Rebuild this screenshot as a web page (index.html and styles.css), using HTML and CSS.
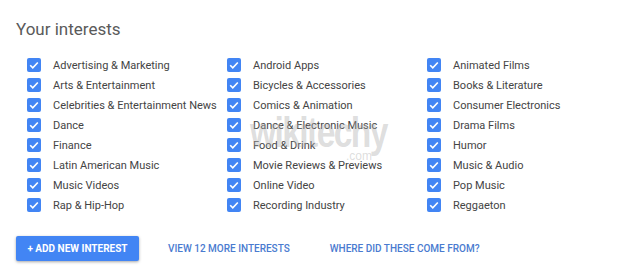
FILE: index.html
```html
<!DOCTYPE html>
<html>
<head>
<meta charset="utf-8">
<link rel="stylesheet" href="styles.css">
</head>
<body>
<div class="page">
  <h1 class="title">Your interests</h1>
  <div class="grid">
    <div class="item"><span class="box"><svg viewBox="0 0 14 14"><path d="M3.2 7.2l2.6 2.6 5-5.3"/></svg></span>Advertising &amp; Marketing</div>
    <div class="item"><span class="box"><svg viewBox="0 0 14 14"><path d="M3.2 7.2l2.6 2.6 5-5.3"/></svg></span>Android Apps</div>
    <div class="item"><span class="box"><svg viewBox="0 0 14 14"><path d="M3.2 7.2l2.6 2.6 5-5.3"/></svg></span>Animated Films</div>
    <div class="item"><span class="box"><svg viewBox="0 0 14 14"><path d="M3.2 7.2l2.6 2.6 5-5.3"/></svg></span>Arts &amp; Entertainment</div>
    <div class="item"><span class="box"><svg viewBox="0 0 14 14"><path d="M3.2 7.2l2.6 2.6 5-5.3"/></svg></span>Bicycles &amp; Accessories</div>
    <div class="item"><span class="box"><svg viewBox="0 0 14 14"><path d="M3.2 7.2l2.6 2.6 5-5.3"/></svg></span>Books &amp; Literature</div>
    <div class="item"><span class="box"><svg viewBox="0 0 14 14"><path d="M3.2 7.2l2.6 2.6 5-5.3"/></svg></span>Celebrities &amp; Entertainment News</div>
    <div class="item"><span class="box"><svg viewBox="0 0 14 14"><path d="M3.2 7.2l2.6 2.6 5-5.3"/></svg></span>Comics &amp; Animation</div>
    <div class="item"><span class="box"><svg viewBox="0 0 14 14"><path d="M3.2 7.2l2.6 2.6 5-5.3"/></svg></span>Consumer Electronics</div>
    <div class="item"><span class="box"><svg viewBox="0 0 14 14"><path d="M3.2 7.2l2.6 2.6 5-5.3"/></svg></span>Dance</div>
    <div class="item"><span class="box"><svg viewBox="0 0 14 14"><path d="M3.2 7.2l2.6 2.6 5-5.3"/></svg></span>Dance &amp; Electronic Music</div>
    <div class="item"><span class="box"><svg viewBox="0 0 14 14"><path d="M3.2 7.2l2.6 2.6 5-5.3"/></svg></span>Drama Films</div>
    <div class="item"><span class="box"><svg viewBox="0 0 14 14"><path d="M3.2 7.2l2.6 2.6 5-5.3"/></svg></span>Finance</div>
    <div class="item"><span class="box"><svg viewBox="0 0 14 14"><path d="M3.2 7.2l2.6 2.6 5-5.3"/></svg></span>Food &amp; Drink</div>
    <div class="item"><span class="box"><svg viewBox="0 0 14 14"><path d="M3.2 7.2l2.6 2.6 5-5.3"/></svg></span>Humor</div>
    <div class="item"><span class="box"><svg viewBox="0 0 14 14"><path d="M3.2 7.2l2.6 2.6 5-5.3"/></svg></span>Latin American Music</div>
    <div class="item"><span class="box"><svg viewBox="0 0 14 14"><path d="M3.2 7.2l2.6 2.6 5-5.3"/></svg></span>Movie Reviews &amp; Previews</div>
    <div class="item"><span class="box"><svg viewBox="0 0 14 14"><path d="M3.2 7.2l2.6 2.6 5-5.3"/></svg></span>Music &amp; Audio</div>
    <div class="item"><span class="box"><svg viewBox="0 0 14 14"><path d="M3.2 7.2l2.6 2.6 5-5.3"/></svg></span>Music Videos</div>
    <div class="item"><span class="box"><svg viewBox="0 0 14 14"><path d="M3.2 7.2l2.6 2.6 5-5.3"/></svg></span>Online Video</div>
    <div class="item"><span class="box"><svg viewBox="0 0 14 14"><path d="M3.2 7.2l2.6 2.6 5-5.3"/></svg></span>Pop Music</div>
    <div class="item"><span class="box"><svg viewBox="0 0 14 14"><path d="M3.2 7.2l2.6 2.6 5-5.3"/></svg></span>Rap &amp; Hip-Hop</div>
    <div class="item"><span class="box"><svg viewBox="0 0 14 14"><path d="M3.2 7.2l2.6 2.6 5-5.3"/></svg></span>Recording Industry</div>
    <div class="item"><span class="box"><svg viewBox="0 0 14 14"><path d="M3.2 7.2l2.6 2.6 5-5.3"/></svg></span>Reggaeton</div>
  </div>
  <div class="actions">
    <button class="btn">+ ADD NEW INTEREST</button>
    <a class="link link-more">VIEW 12 MORE INTERESTS</a>
    <a class="link">WHERE DID THESE COME FROM?</a>
  </div>
  <div class="watermark"><span class="wm-main">wikitechy</span><span class="wm-com">.com</span></div>
</div>
</body>
</html>
```
FILE: styles.css
```css
html, body {
  margin: 0;
  padding: 0;
  background: #ffffff;
}
.page {
  position: relative;
  width: 640px;
  height: 276px;
  padding: 17px 0 0 16px;
  box-sizing: border-box;
  font-family: Roboto, "Liberation Sans", Arial, sans-serif;
}
.title {
  margin: 0;
  font-size: 17px;
  line-height: 24px;
  font-weight: 400;
  color: #5a5a5a;
}
.grid {
  margin-top: 14px;
  margin-left: 11px;
  display: grid;
  grid-template-columns: 200px 200px 200px;
  grid-auto-rows: 20px;
}
.item {
  display: flex;
  align-items: center;
  font-size: 11px;
  color: #444444;
  white-space: nowrap;
}
.box {
  width: 14px;
  height: 14px;
  border-radius: 2px;
  background: #4285f4;
  margin-right: 12px;
  display: flex;
  flex: none;
}
.box svg {
  width: 14px;
  height: 14px;
}
.box path {
  fill: none;
  stroke: #ffffff;
  stroke-width: 1.6;
}
.actions {
  margin-top: 21px;
  display: flex;
  align-items: center;
}
.btn {
  width: 123px;
  height: 25px;
  border: none;
  border-radius: 2px;
  background: #4285f4;
  color: #ffffff;
  font-family: Roboto, "Liberation Sans", Arial, sans-serif;
  font-size: 10px;
  font-weight: 700;
  padding: 0;
  box-shadow: 0 1px 3px rgba(0, 0, 0, 0.35);
}
.link {
  font-size: 10px;
  font-weight: 500;
  color: #4a7bd0;
  text-transform: uppercase;
}
.link-more {
  margin-left: 29px;
  margin-right: 40px;
}
.watermark {
  position: absolute;
  left: 250px;
  top: 110px;
  pointer-events: none;
  color: rgba(170, 170, 170, 0.4);
  font-family: "Liberation Sans", sans-serif;
}
.wm-main {
  display: block;
  font-size: 42px;
  font-weight: 700;
  line-height: 46px;
  letter-spacing: -2px;
  transform: scaleX(0.8);
  transform-origin: left center;
}
.wm-com {
  position: absolute;
  left: 96px;
  top: 40px;
  font-size: 12px;
  line-height: 12px;
}
```
